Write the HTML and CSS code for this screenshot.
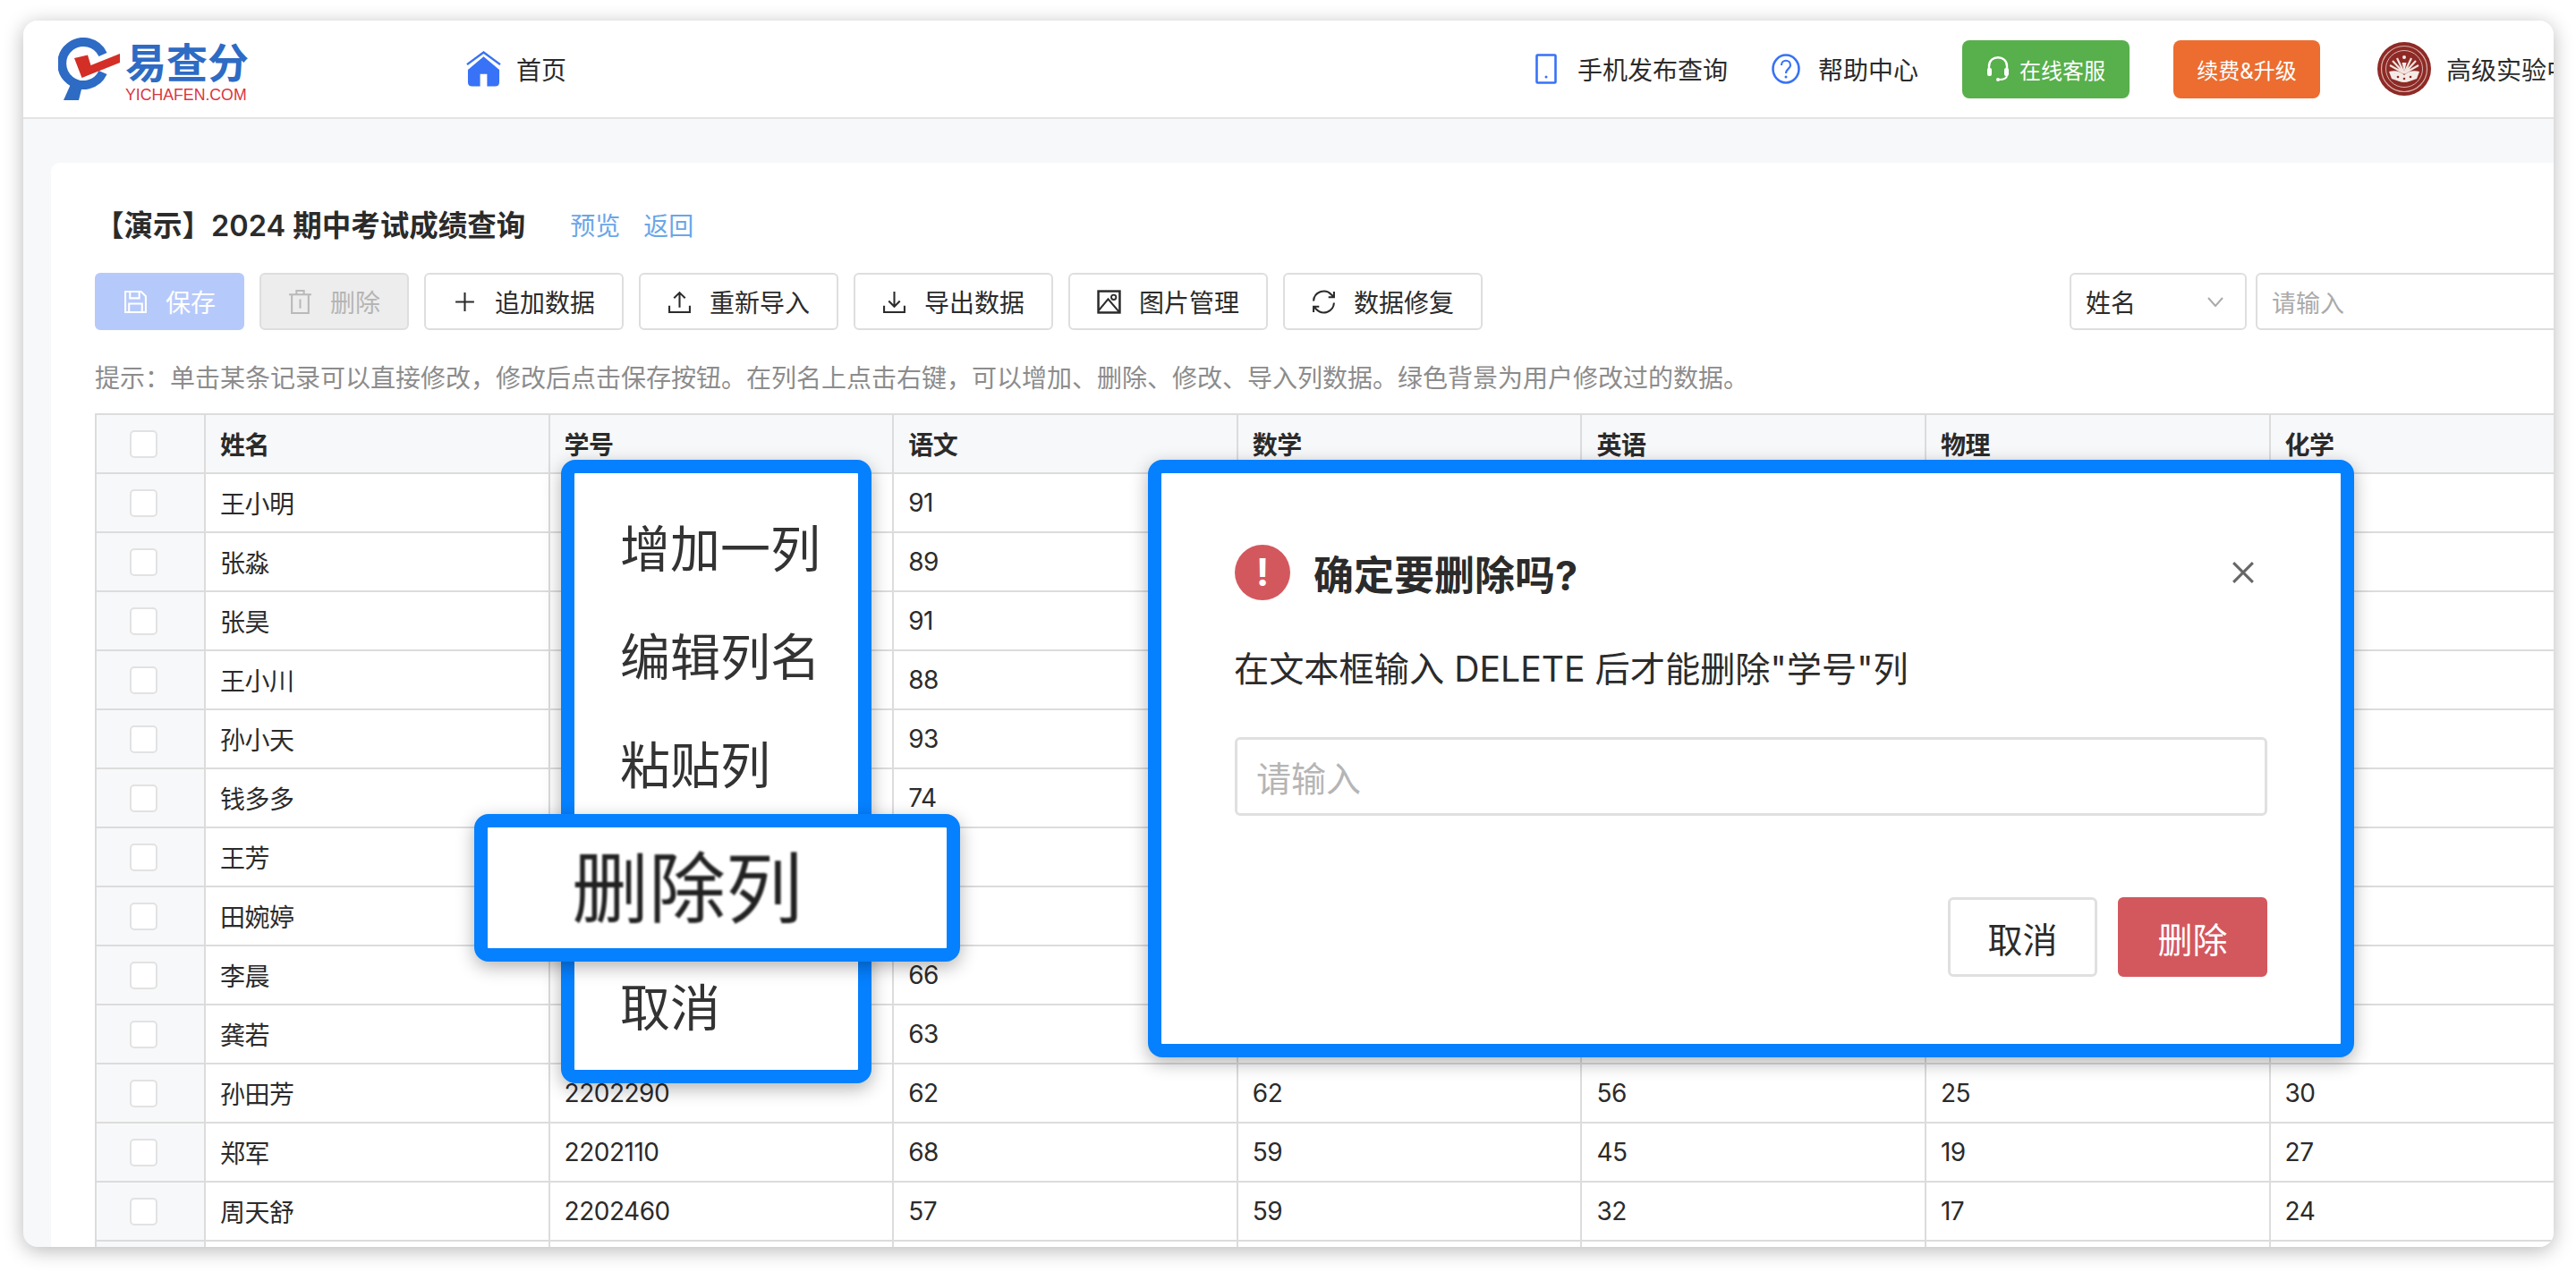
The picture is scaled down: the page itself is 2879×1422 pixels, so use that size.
FILE: index.html
```html
<!DOCTYPE html>
<html lang="zh-CN">
<head>
    <meta charset="UTF-8">
    <title>易查分 - 编辑成绩查询</title>
    <link rel="stylesheet" href="styles.css">
</head>
<body>

<div class="window">
    <!-- 顶部导航 -->
    <header class="topbar">
        <div class="logo">
            <svg class="logo-mark" viewBox="0 0 70 70" xmlns="http://www.w3.org/2000/svg">
                <path d="M6 70 L15 50 L27 54 L23 70 Z" fill="#2d6bc4"/>
                <path d="M50 39 A24 24 0 1 1 50 19" fill="none" stroke="#2d6bc4" stroke-width="10"/>
                <path d="M18 23 L33 19.5 L36.5 31 L69 18 L69 28 L26.5 45 Z" fill="#d32f27"/>
            </svg>
            <div class="logo-text">
                <span class="logo-name">易查分</span>
                <span class="logo-url">YICHAFEN.COM</span>
            </div>
        </div>
        <a class="nav-home">
            <svg class="home-icon" viewBox="0 0 40 40" xmlns="http://www.w3.org/2000/svg">
                <path d="M1 15 L20 1 L39 15" fill="none" stroke="#3872f6" stroke-width="2.5"/>
                <path d="M2 21 L20 6 L38 21 V35 Q38 40 33 40 H7 Q2 40 2 35 Z M16 26 V40 H24 V26 Z" fill="#3872f6" fill-rule="evenodd"/>
            </svg>
            首页
        </a>
        <div class="top-actions">
            <a class="top-link">
                <svg class="phone-icon" viewBox="0 0 24 34" xmlns="http://www.w3.org/2000/svg">
                    <rect x="1.5" y="1.5" width="21" height="31" rx="1" fill="none" stroke="#3872f6" stroke-width="2.6"/>
                    <circle cx="12" cy="26" r="1.5" fill="#3872f6"/>
                </svg>
                手机发布查询
            </a>
            <a class="top-link help-link">
                <svg class="help-icon" viewBox="0 0 32 34" xmlns="http://www.w3.org/2000/svg">
                    <ellipse cx="16" cy="17" rx="14.5" ry="15.5" fill="none" stroke="#3872f6" stroke-width="2.6"/>
                    <path d="M11 13 C11 6 21 6 21 13 C21 17 16 17 16 22" fill="none" stroke="#3872f6" stroke-width="2.2"/>
                    <circle cx="16" cy="26" r="1.5" fill="#3872f6"/>
                </svg>
                帮助中心
            </a>
            <a class="top-btn btn-service">
                <svg class="headset-icon" viewBox="0 0 26 30" xmlns="http://www.w3.org/2000/svg">
                    <path d="M3 17 V12 C3 -1 23 -1 23 12 V17" fill="none" stroke="#fff" stroke-width="2.4"/>
                    <rect x="1" y="14" width="5" height="9" rx="2" fill="#fff"/>
                    <rect x="20" y="14" width="5" height="9" rx="2" fill="#fff"/>
                    <path d="M23 22 C23 26 19 27 14 27" fill="none" stroke="#fff" stroke-width="2"/>
                    <circle cx="13" cy="27" r="2" fill="#fff"/>
                </svg>
                在线客服
            </a>
            <a class="top-btn btn-renew">续费&amp;升级</a>
            <div class="user">
                <svg class="avatar" viewBox="0 0 60 60" xmlns="http://www.w3.org/2000/svg">
                    <circle cx="30" cy="30" r="30" fill="#8e2a26"/>
                    <circle cx="30" cy="30" r="25.5" fill="none" stroke="#d9b3ac" stroke-width="1.2"/>
                    <circle cx="30" cy="30" r="20.5" fill="none" stroke="#d9b3ac" stroke-width="1"/>
                    <path d="M30 35 L14 26 M30 35 L17 21 M30 35 L22 18 M30 35 L38 18 M30 35 L43 21 M30 35 L46 26" fill="none" stroke="#f2e4df" stroke-width="2.2"/>
                    <path d="M13 33 C20 31 26 33 30 37 C34 33 40 31 47 33 L44 41 C38 43 34 45 30 45 C26 45 22 43 16 41 Z" fill="#f4eae6"/>
                    <circle cx="23" cy="39" r="1.3" fill="#8e2a26"/>
                    <circle cx="30" cy="41" r="1.3" fill="#8e2a26"/>
                    <circle cx="37" cy="39" r="1.3" fill="#8e2a26"/>
                    <circle cx="30" cy="17" r="2" fill="#f4eae6"/>
                    <path d="M30 34 L27.5 23 L32.5 23 Z" fill="#f4eae6"/>
                </svg>
                <span>高级实验中学</span>
            </div>
        </div>
    </header>

    <main class="page">
        <section class="card">
            <div class="title-row">
                <h1 class="title">【演示】2024 期中考试成绩查询</h1>
                <a class="title-link">预览</a>
                <a class="title-link">返回</a>
            </div>

            <div class="toolbar">
                <div class="btn-group">
                    <button class="btn btn-primary">
                        <svg class="icon" viewBox="0 0 26 26" xmlns="http://www.w3.org/2000/svg">
                            <path d="M2 2 H19 L24 7 V24 H2 Z M7 2 V9 H17 V2 M6 24 V15 H20 V24" fill="none" stroke="#fff" stroke-width="2"/>
                        </svg>
                        保存
                    </button>
                    <button class="btn btn-disabled">
                        <svg class="icon" viewBox="0 0 26 26" xmlns="http://www.w3.org/2000/svg">
                            <path d="M1 5 H25 M9 5 V1 H17 V5 M4 5 V25 H22 V5 M13 10 V20" fill="none" stroke="#b9b9b9" stroke-width="2"/>
                        </svg>
                        删除
                    </button>
                    <button class="btn">
                        <svg class="icon" viewBox="0 0 26 26" xmlns="http://www.w3.org/2000/svg">
                            <path d="M13 3 V23 M3 13 H23" fill="none" stroke="#2b2b2b" stroke-width="2"/>
                        </svg>
                        追加数据
                    </button>
                    <button class="btn">
                        <svg class="icon" viewBox="0 0 26 26" xmlns="http://www.w3.org/2000/svg">
                            <path d="M2 17 V24 H24 V17 M13 19 V3 M7 9 L13 3 L19 9" fill="none" stroke="#2b2b2b" stroke-width="2"/>
                        </svg>
                        重新导入
                    </button>
                    <button class="btn">
                        <svg class="icon" viewBox="0 0 26 26" xmlns="http://www.w3.org/2000/svg">
                            <path d="M2 17 V24 H24 V17 M13 2 V18 M7 12 L13 18 L19 12" fill="none" stroke="#2b2b2b" stroke-width="2"/>
                        </svg>
                        导出数据
                    </button>
                    <button class="btn">
                        <svg class="icon" viewBox="0 0 26 26" xmlns="http://www.w3.org/2000/svg">
                            <rect x="1.5" y="1.5" width="23" height="23" fill="none" stroke="#2b2b2b" stroke-width="2.4"/>
                            <path d="M2 22 L12 10 L24 24" fill="none" stroke="#2b2b2b" stroke-width="2"/>
                            <circle cx="18" cy="8" r="2.6" fill="none" stroke="#2b2b2b" stroke-width="1.8"/>
                        </svg>
                        图片管理
                    </button>
                    <button class="btn">
                        <svg class="icon" viewBox="0 0 26 26" xmlns="http://www.w3.org/2000/svg">
                            <path d="M2 12 A11 11 0 0 1 21 5 L24 8 M24 2 V8 H18 M24 14 A11 11 0 0 1 5 21 L2 18 M2 24 V18 H8" fill="none" stroke="#2b2b2b" stroke-width="2"/>
                        </svg>
                        数据修复
                    </button>
                </div>
                <div class="search">
                    <div class="select">
                        <span>姓名</span>
                        <svg class="chevron" viewBox="0 0 18 11" xmlns="http://www.w3.org/2000/svg">
                            <path d="M1 1 L9 10 L17 1" fill="none" stroke="#aaa" stroke-width="2"/>
                        </svg>
                    </div>
                    <div class="search-input">请输入</div>
                </div>
            </div>

            <p class="hint">提示&#xFF1A;单击某条记录可以直接修改&#xFF0C;修改后点击保存按钮。在列名上点击右键&#xFF0C;可以增加、删除、修改、导入列数据。绿色背景为用户修改过的数据。</p>

            <table class="score-table">
                <colgroup>
                    <col class="col-check">
                    <col class="col-data"><col class="col-data"><col class="col-data"><col class="col-data"><col class="col-data"><col class="col-data">
                    <col>
                </colgroup>
                <thead>
                    <tr><th class="check-cell"><i class="checkbox"></i></th><th>姓名</th><th>学号</th><th>语文</th><th>数学</th><th>英语</th><th>物理</th><th>化学</th></tr>
                </thead>
                <tbody>
                    <tr><td class="check-cell"><i class="checkbox"></i></td><td>王小明</td><td></td><td>91</td><td></td><td></td><td></td><td></td></tr>
                    <tr><td class="check-cell"><i class="checkbox"></i></td><td>张淼</td><td></td><td>89</td><td></td><td></td><td></td><td></td></tr>
                    <tr><td class="check-cell"><i class="checkbox"></i></td><td>张昊</td><td></td><td>91</td><td></td><td></td><td></td><td></td></tr>
                    <tr><td class="check-cell"><i class="checkbox"></i></td><td>王小川</td><td></td><td>88</td><td></td><td></td><td></td><td></td></tr>
                    <tr><td class="check-cell"><i class="checkbox"></i></td><td>孙小天</td><td></td><td>93</td><td></td><td></td><td></td><td></td></tr>
                    <tr><td class="check-cell"><i class="checkbox"></i></td><td>钱多多</td><td></td><td>74</td><td></td><td></td><td></td><td></td></tr>
                    <tr><td class="check-cell"><i class="checkbox"></i></td><td>王芳</td><td></td><td></td><td></td><td></td><td></td><td></td></tr>
                    <tr><td class="check-cell"><i class="checkbox"></i></td><td>田婉婷</td><td></td><td></td><td></td><td></td><td></td><td></td></tr>
                    <tr><td class="check-cell"><i class="checkbox"></i></td><td>李晨</td><td></td><td>66</td><td></td><td></td><td></td><td></td></tr>
                    <tr><td class="check-cell"><i class="checkbox"></i></td><td>龚若</td><td></td><td>63</td><td></td><td></td><td></td><td></td></tr>
                    <tr><td class="check-cell"><i class="checkbox"></i></td><td>孙田芳</td><td>2202290</td><td>62</td><td>62</td><td>56</td><td>25</td><td>30</td></tr>
                    <tr><td class="check-cell"><i class="checkbox"></i></td><td>郑军</td><td>2202110</td><td>68</td><td>59</td><td>45</td><td>19</td><td>27</td></tr>
                    <tr><td class="check-cell"><i class="checkbox"></i></td><td>周天舒</td><td>2202460</td><td>57</td><td>59</td><td>32</td><td>17</td><td>24</td></tr>
                    <tr><td class="check-cell"></td><td></td><td></td><td></td><td></td><td></td><td></td><td></td></tr>
                </tbody>
            </table>
        </section>
    </main>

    <!-- 右键菜单 -->
    <div class="frame context-menu">
        <div class="menu-item">增加一列</div>
        <div class="menu-item">编辑列名</div>
        <div class="menu-item">粘贴列</div>
        <div class="menu-item menu-cancel">取消</div>
    </div>
    <div class="frame delete-callout"><span>删除列</span></div>

    <!-- 删除确认弹窗 -->
    <div class="frame dialog">
        <div class="dialog-head">
            <span class="alert-icon">!</span>
            <h2 class="dialog-title">确定要删除吗?</h2>
            <svg class="close-icon" viewBox="0 0 24 24" xmlns="http://www.w3.org/2000/svg">
                <path d="M2 2 L22 22 M22 2 L2 22" fill="none" stroke="#666" stroke-width="2.8"/>
            </svg>
        </div>
        <p class="dialog-text">在文本框输入 DELETE 后才能删除"学号"列</p>
        <div class="dialog-input">请输入</div>
        <div class="dialog-foot">
            <button class="dialog-btn">取消</button>
            <button class="dialog-btn dialog-danger">删除</button>
        </div>
    </div>
</div>

</body>
</html>
```

FILE: styles.css
```css
* {
    box-sizing: border-box;
}
body {
    margin: 0;
    padding: 23px 25px 28px 26px;
    background: #fff;
    color: #2b2b2b;
    font-family: "Inter", "Noto Sans CJK SC", sans-serif;
    font-size: 28px;
}
h1, h2, p {
    margin: 0;
    font: inherit;
}
button {
    font: inherit;
}

/* 窗口 */
.window {
    position: relative;
    height: 1371px;
    overflow: hidden;
    border-radius: 16px;
    background: #f7f8fa;
    box-shadow: 0 4px 22px rgba(0, 0, 0, .28);
}

/* 顶部导航 */
.topbar {
    display: flex;
    align-items: center;
    height: 110px;
    padding-left: 39px;
    background: #fff;
    border-bottom: 2px solid #e4e4e4;
}
.logo {
    display: flex;
    gap: 5px;
    align-items: flex-start;
    flex-shrink: 0;
}
.logo-mark {
    width: 70px;
    height: 70px;
}
.logo-text {
    display: flex;
    flex-direction: column;
    align-items: flex-start;
    height: 70px;
    padding-top: 4px;
}
.logo-name {
    color: #2d6bc4;
    font-size: 46px;
    font-weight: 700;
    line-height: 48px;
}
.logo-url {
    margin-top: 3px;
    color: #d9363e;
    font-family: "Liberation Sans", sans-serif;
    font-size: 17.7px;
    line-height: 18px;
}
.nav-home {
    display: flex;
    align-items: center;
    gap: 17px;
    margin-left: 243px;
    flex-shrink: 0;
}
.home-icon {
    width: 39px;
    height: 40px;
}
.top-actions {
    display: flex;
    align-items: center;
    gap: 49px;
    margin-left: auto;
    margin-right: -48px;
    flex-shrink: 0;
}
.top-link {
    display: flex;
    align-items: center;
    gap: 23px;
}
.help-link {
    gap: 20px;
}
.phone-icon {
    width: 24px;
    height: 34px;
}
.help-icon {
    width: 32px;
    height: 34px;
}
.top-btn {
    display: flex;
    align-items: center;
    justify-content: center;
    gap: 11px;
    height: 65px;
    border-radius: 8px;
    color: #fff;
    font-size: 24px;
}
.btn-service {
    width: 187px;
    background: #57b04b;
}
.btn-renew {
    width: 164px;
    background: #ec6d2f;
}
.headset-icon {
    width: 26px;
    height: 30px;
}
.user {
    display: flex;
    align-items: center;
    gap: 17px;
    margin-left: 15px;
}
.avatar {
    width: 60px;
    height: 60px;
}

/* 内容卡片 */
.page {
    padding: 49px 0 0 31px;
}
.card {
    width: 2900px;
    padding: 51px 0 0 49px;
    border-radius: 10px;
    background: #fff;
}
.title-row {
    display: flex;
    align-items: center;
    line-height: 40px;
}
.title {
    margin-right: 50px;
    font-size: 32.5px;
    font-weight: 600;
}
.title-link {
    margin-right: 26px;
    color: #6aa6e8;
}

/* 工具栏 */
.toolbar {
    display: flex;
    justify-content: space-between;
    margin-top: 32px;
}
.btn-group {
    display: flex;
    gap: 17px;
}
.btn {
    display: flex;
    align-items: center;
    justify-content: center;
    gap: 20px;
    width: 223px;
    height: 64px;
    padding: 0;
    border: 2px solid #dedede;
    border-radius: 6px;
    background: #fff;
    color: #2b2b2b;
}
.btn-primary {
    width: 167px;
    border-color: #b6c9fb;
    background: #b6c9fb;
    color: #fff;
}
.btn-disabled {
    width: 167px;
    background: #ededed;
    color: #b5b5b5;
}
.icon {
    width: 27px;
    height: 27px;
}
.search {
    display: flex;
    gap: 10px;
}
.select {
    display: flex;
    align-items: center;
    justify-content: space-between;
    width: 198px;
    height: 64px;
    padding: 0 24px 0 16px;
    border: 2px solid #dedede;
    border-radius: 6px;
}
.chevron {
    width: 18px;
    height: 11px;
}
.search-input {
    display: flex;
    align-items: center;
    width: 436px;
    height: 64px;
    padding-left: 16px;
    border: 2px solid #dedede;
    border-radius: 6px;
    color: #aaa;
    font-size: 27px;
}
.hint {
    margin-top: 34px;
    color: #8c8c8c;
    line-height: 40px;
}

/* 成绩表格 */
.score-table {
    width: 2851px;
    margin-top: 19px;
    border-collapse: collapse;
    table-layout: fixed;
    letter-spacing: -.5px;
}
.col-check {
    width: 122px;
}
.col-data {
    width: 384.6px;
}
.score-table th,
.score-table td {
    height: 66px;
    padding: 0 16px;
    border: 2px solid #dcdcdc;
    text-align: left;
}
.score-table th {
    background: #f7f8fa;
    font-weight: 600;
}
.score-table td {
    font-weight: 400;
}
.score-table .check-cell {
    padding: 0;
    background: #f7f8fa;
}
.checkbox {
    display: block;
    width: 31px;
    height: 31px;
    margin-left: 37px;
    border: 2px solid #e2e2e2;
    border-radius: 5px;
    background: #fff;
}

/* 蓝框标注 */
.frame {
    position: absolute;
    border: 15px solid #0580ff;
    border-radius: 16px;
    background: #fff;
    box-shadow: 0 6px 20px rgba(0, 0, 0, .3);
}
.context-menu {
    top: 491px;
    left: 601px;
    width: 347px;
    height: 697px;
    padding: 25px 0 0 51px;
}
.menu-item {
    height: 121px;
    font-size: 56px;
    line-height: 121px;
    white-space: nowrap;
    color: #333;
}
.menu-cancel {
    margin-top: 150px;
}
.delete-callout {
    display: flex;
    align-items: center;
    top: 887px;
    left: 504px;
    width: 543px;
    height: 165px;
    padding: 0 0 10px 94px;
    font-size: 86px;
    color: #222;
}
.delete-callout span {
    filter: blur(.8px);
}

/* 确认弹窗 */
.dialog {
    top: 491px;
    left: 1257px;
    width: 1348px;
    height: 668px;
    padding: 80px 82px 0 82px;
}
.dialog-head {
    display: flex;
    align-items: center;
    height: 62px;
}
.alert-icon {
    width: 62px;
    height: 62px;
    margin-right: 26px;
    border-radius: 50%;
    background: #d3585e;
    color: #fff;
    font-size: 42px;
    font-weight: 700;
    line-height: 62px;
    text-align: center;
}
.dialog-title {
    font-size: 45px;
    font-weight: 700;
}
.close-icon {
    width: 26px;
    height: 26px;
    margin-left: auto;
    margin-right: 14px;
}
.dialog-text {
    margin-top: 47px;
    margin-left: -1px;
    font-size: 39.2px;
    line-height: 60px;
}
.dialog-input {
    display: flex;
    align-items: center;
    height: 88px;
    margin-top: 46px;
    padding-left: 21px;
    border: 3px solid #e0e0e0;
    border-radius: 6px;
    color: #b5b5b5;
    font-size: 39px;
}
.dialog-foot {
    display: flex;
    justify-content: flex-end;
    gap: 23px;
    margin-top: 91px;
}
.dialog-btn {
    width: 167px;
    height: 89px;
    padding: 0;
    border: 3px solid #e0e0e0;
    border-radius: 6px;
    background: #fff;
    color: #2b2b2b;
    font-size: 39px;
}
.dialog-danger {
    border-color: #d3585e;
    background: #d3585e;
    color: #fff;
}
```
